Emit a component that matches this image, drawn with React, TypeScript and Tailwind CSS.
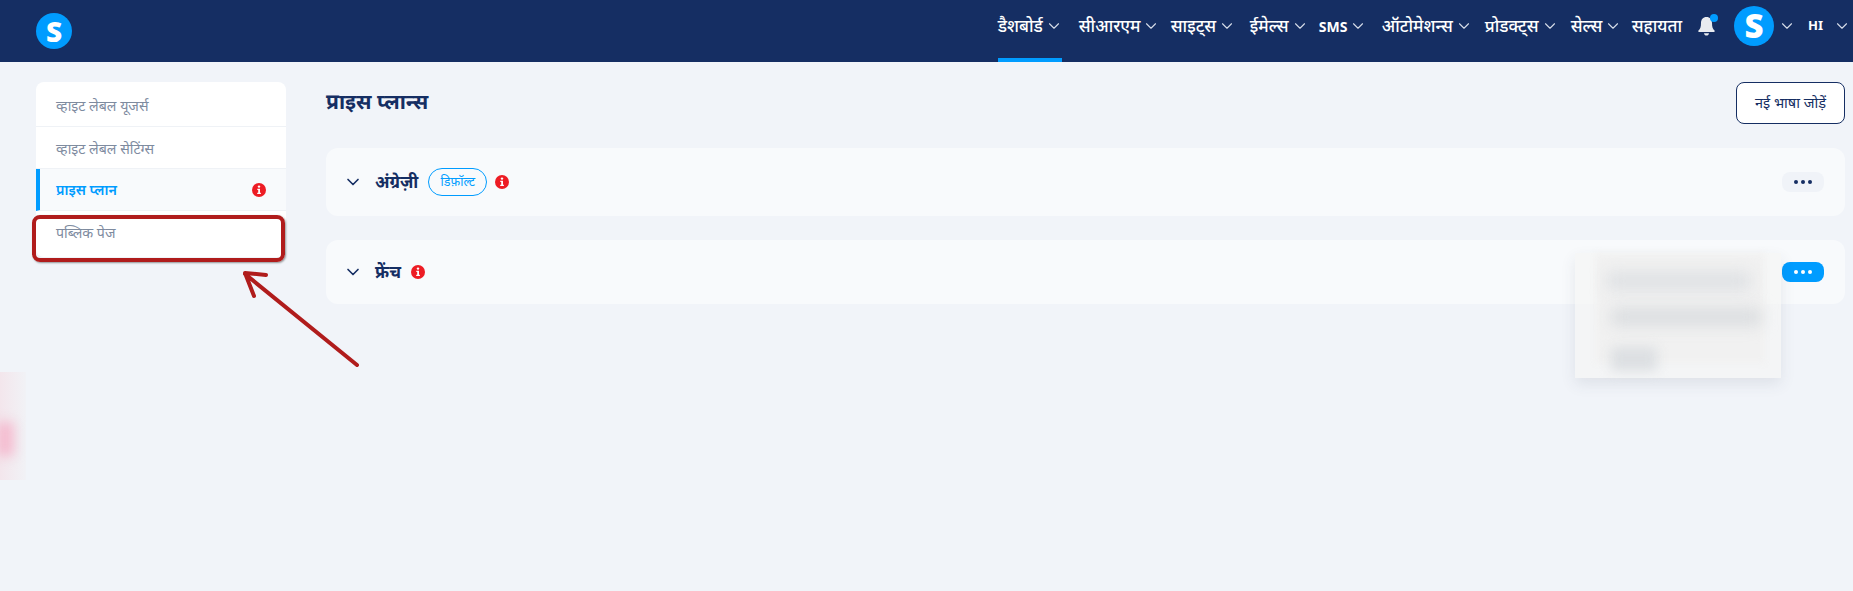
import { ChevronDown } from "lucide-react"

const navItems = [
  { label: "डैशबोर्ड", width: "w-[81px]", active: true },
  { label: "सीआरएम", width: "w-[92px]" },
  { label: "साइट्स", width: "w-[79px]" },
  { label: "ईमेल्स", width: "w-[69px]" },
  { label: "SMS", width: "w-[63px]", latin: true },
  { label: "ऑटोमेशन्स", width: "w-[103px]" },
  { label: "प्रोडक्ट्स", width: "w-[86px]" },
  { label: "सेल्स", width: "w-[61px]" },
]

function Logo({ className }: { className: string }) {
  return (
    <div className={`flex items-center justify-center rounded-full bg-[#009cff] font-black text-white ${className}`}>
      S
    </div>
  )
}

function InfoDot() {
  return (
    <svg width="14" height="14" viewBox="0 0 14 14" className="shrink-0">
      <circle cx="7" cy="7" r="7" fill="#ed1c24" />
      <circle cx="7" cy="3.6" r="1.2" fill="#fff" />
      <path d="M5.3 5.8H8v3.9h.9v1.2H5.2V9.7h1V7H5.3z" fill="#fff" />
    </svg>
  )
}

function Dots({ color }: { color: string }) {
  return (
    <span className="flex gap-[3px]">
      <span className={`h-1 w-1 rounded-full ${color}`} />
      <span className={`h-1 w-1 rounded-full ${color}`} />
      <span className={`h-1 w-1 rounded-full ${color}`} />
    </span>
  )
}

function Header() {
  return (
    <header className="flex h-[62px] items-center justify-between bg-[#152e63] pl-9 pr-[2px]">
      <Logo className="h-9 w-9 text-[28px]" />
      <nav className="flex h-full items-center text-[17px] font-medium text-white">
        {navItems.map(item => (
          <div key={item.label} className={`relative flex h-full items-center gap-[2px] pb-[10px] ${item.width}`}>
            <span className={item.latin ? "text-[14px] font-bold" : ""}>{item.label}</span>
            <ChevronDown size={18} strokeWidth={1.5} className="shrink-0 text-[#d5dce8]" />
            {item.active && <span className="absolute bottom-0 left-0 h-1 w-[64px] bg-[#009cff]" />}
          </div>
        ))}
        <div className="flex h-full items-center pb-[10px]">
          <span className="mr-[16px]">सहायता</span>
          <div className="relative mr-[19px]">
            <svg width="17" height="19" viewBox="0 0 17 19" className="block">
              <path d="M8.500 0C5 0 3 2.600 3 6c0 4-.8 6-2.500 7.600-.5.5-.3 1.400.6 1.400h14.800c.9 0 1.100-.9.6-1.400C14.800 12 14 10 14 6c0-3.400-2-6-5.500-6z" fill="#e9ebef" />
              <path d="M6 16.200h5c-.2 1.600-1.200 2.400-2.500 2.400S6.200 17.800 6 16.200z" fill="#e9ebef" />
            </svg>
            <span className="absolute -right-[3px] -top-[3px] h-2 w-2 rounded-full bg-[#009cff]" />
          </div>
          <Logo className="mr-[4px] h-10 w-10 text-[33px]" />
          <ChevronDown size={18} strokeWidth={1.5} className="mr-3 text-[#d5dce8]" />
          <span className="mr-[10px] text-[13px] font-bold">HI</span>
          <ChevronDown size={18} strokeWidth={1.5} className="text-[#d5dce8]" />
        </div>
      </nav>
    </header>
  )
}

function Sidebar() {
  return (
    <aside className="h-[175px] w-[250px] shrink-0 overflow-hidden rounded-lg bg-white text-[14.2px] text-[#7e8b9f]">
      <div className="flex h-[45px] items-center border-b border-[#eff2f6] pl-5 pt-1">व्हाइट लेबल यूजर्स</div>
      <div className="flex h-[42px] items-center border-b border-[#eff2f6] pl-5 pt-[2px]">व्हाइट लेबल सेटिंग्स</div>
      <div className="flex h-[42px] items-center justify-between border-b border-[#eff2f6] border-l-4 border-l-[#009cff] bg-[#f8fafc] pl-4 pr-5 font-semibold text-[#009cff]">
        <span>प्राइस प्लान</span>
        <InfoDot />
      </div>
      <div className="pl-5 pt-[11px]">पब्लिक पेज</div>
    </aside>
  )
}

function LanguageRow({ name, isDefault, active, height }: { name: string; isDefault?: boolean; active?: boolean; height: string }) {
  return (
    <div className={`flex items-center justify-between rounded-xl bg-[#f8fafc] pl-[17px] pr-[21px] ${height}`}>
      <div className="flex items-center">
        <ChevronDown size={20} strokeWidth={2} className="mr-3 text-[#152e63]" />
        <span className="mr-[10px] text-[17px] font-bold text-[#152e63]">{name}</span>
        {isDefault && (
          <span className="mr-2 flex h-7 w-[59px] items-center justify-center rounded-full border border-[#009cff] text-[12.5px] text-[#009cff]">
            डिफ़ॉल्ट
          </span>
        )}
        <InfoDot />
      </div>
      <button className={`flex h-5 w-[42px] items-center justify-center rounded-lg ${active ? "bg-[#009cff]" : "bg-[#f0f3f8]"}`}>
        <Dots color={active ? "bg-white" : "bg-[#152e63]"} />
      </button>
    </div>
  )
}

export default function App() {
  return (
    <div className="relative h-[591px] overflow-hidden bg-[#f1f4f9]" style={{ fontFamily: '"Noto Sans", "Noto Sans Devanagari", "Open Sans", sans-serif' }}>
      <Header />
      <div className="flex gap-10 pl-9 pr-2 pt-5">
        <Sidebar />
        <main className="flex-1">
          <div className="mb-6 flex h-[42px] items-center justify-between">
            <h1 className="-mt-[2px] text-[21px] font-bold text-[#152e63]">प्राइस प्लान्स</h1>
            <button className="h-[42px] w-[109px] rounded-lg border border-[#152e63] bg-white text-[14.5px] text-[#152e63]">नई भाषा जोड़ें</button>
          </div>
          <div className="flex flex-col gap-6">
            <LanguageRow name="अंग्रेज़ी" isDefault height="h-[68px]" />
            <LanguageRow name="फ्रेंच" active height="h-[64px]" />
          </div>
        </main>
      </div>

      {/* blurred menu over the second row */}
      <div className="absolute left-[1575px] top-[253px] h-[125px] w-[206px] bg-[#f5f5f5]/70 shadow-[0_6px_14px_rgba(60,70,90,0.1)]">
        <div className="absolute left-5 top-0 h-[110px] w-[170px] bg-[#f1f1f1] blur-[3px]" />
        <div className="absolute left-8 top-5 h-4 w-[143px] bg-[#dcdfe2] blur-[8px]" />
        <div className="absolute left-9 top-[56px] h-4 w-[150px] bg-[#d8dbde] blur-[8px]" />
        <div className="absolute left-9 top-[94px] h-6 w-[46px] bg-[#dcdfe2] blur-[6px]" />
      </div>

      {/* blurred widget on the left edge */}
      <div className="absolute left-0 top-[372px] h-[108px] w-[26px] bg-gradient-to-r from-[#f3e6ec] to-[#f1f2f6]">
        <div className="absolute -left-1 top-[50px] h-[34px] w-[18px] bg-[#f4bcd0] blur-[6px]" />
      </div>

      {/* annotation */}
      <div className="absolute left-[32px] top-[215px] h-[47px] w-[253px] rounded-lg border-[4px] border-[#b01c1c] shadow-[1px_1px_2px_rgba(0,0,0,0.4)]" />
      <svg className="absolute left-[235px] top-[265px]" width="130" height="110" viewBox="0 0 130 110">
        <path d="M122 100 10 9M31 10 10 8l9 23" fill="none" stroke="#b01c1c" strokeWidth="4" strokeLinecap="round" strokeLinejoin="round" />
      </svg>
    </div>
  )
}
